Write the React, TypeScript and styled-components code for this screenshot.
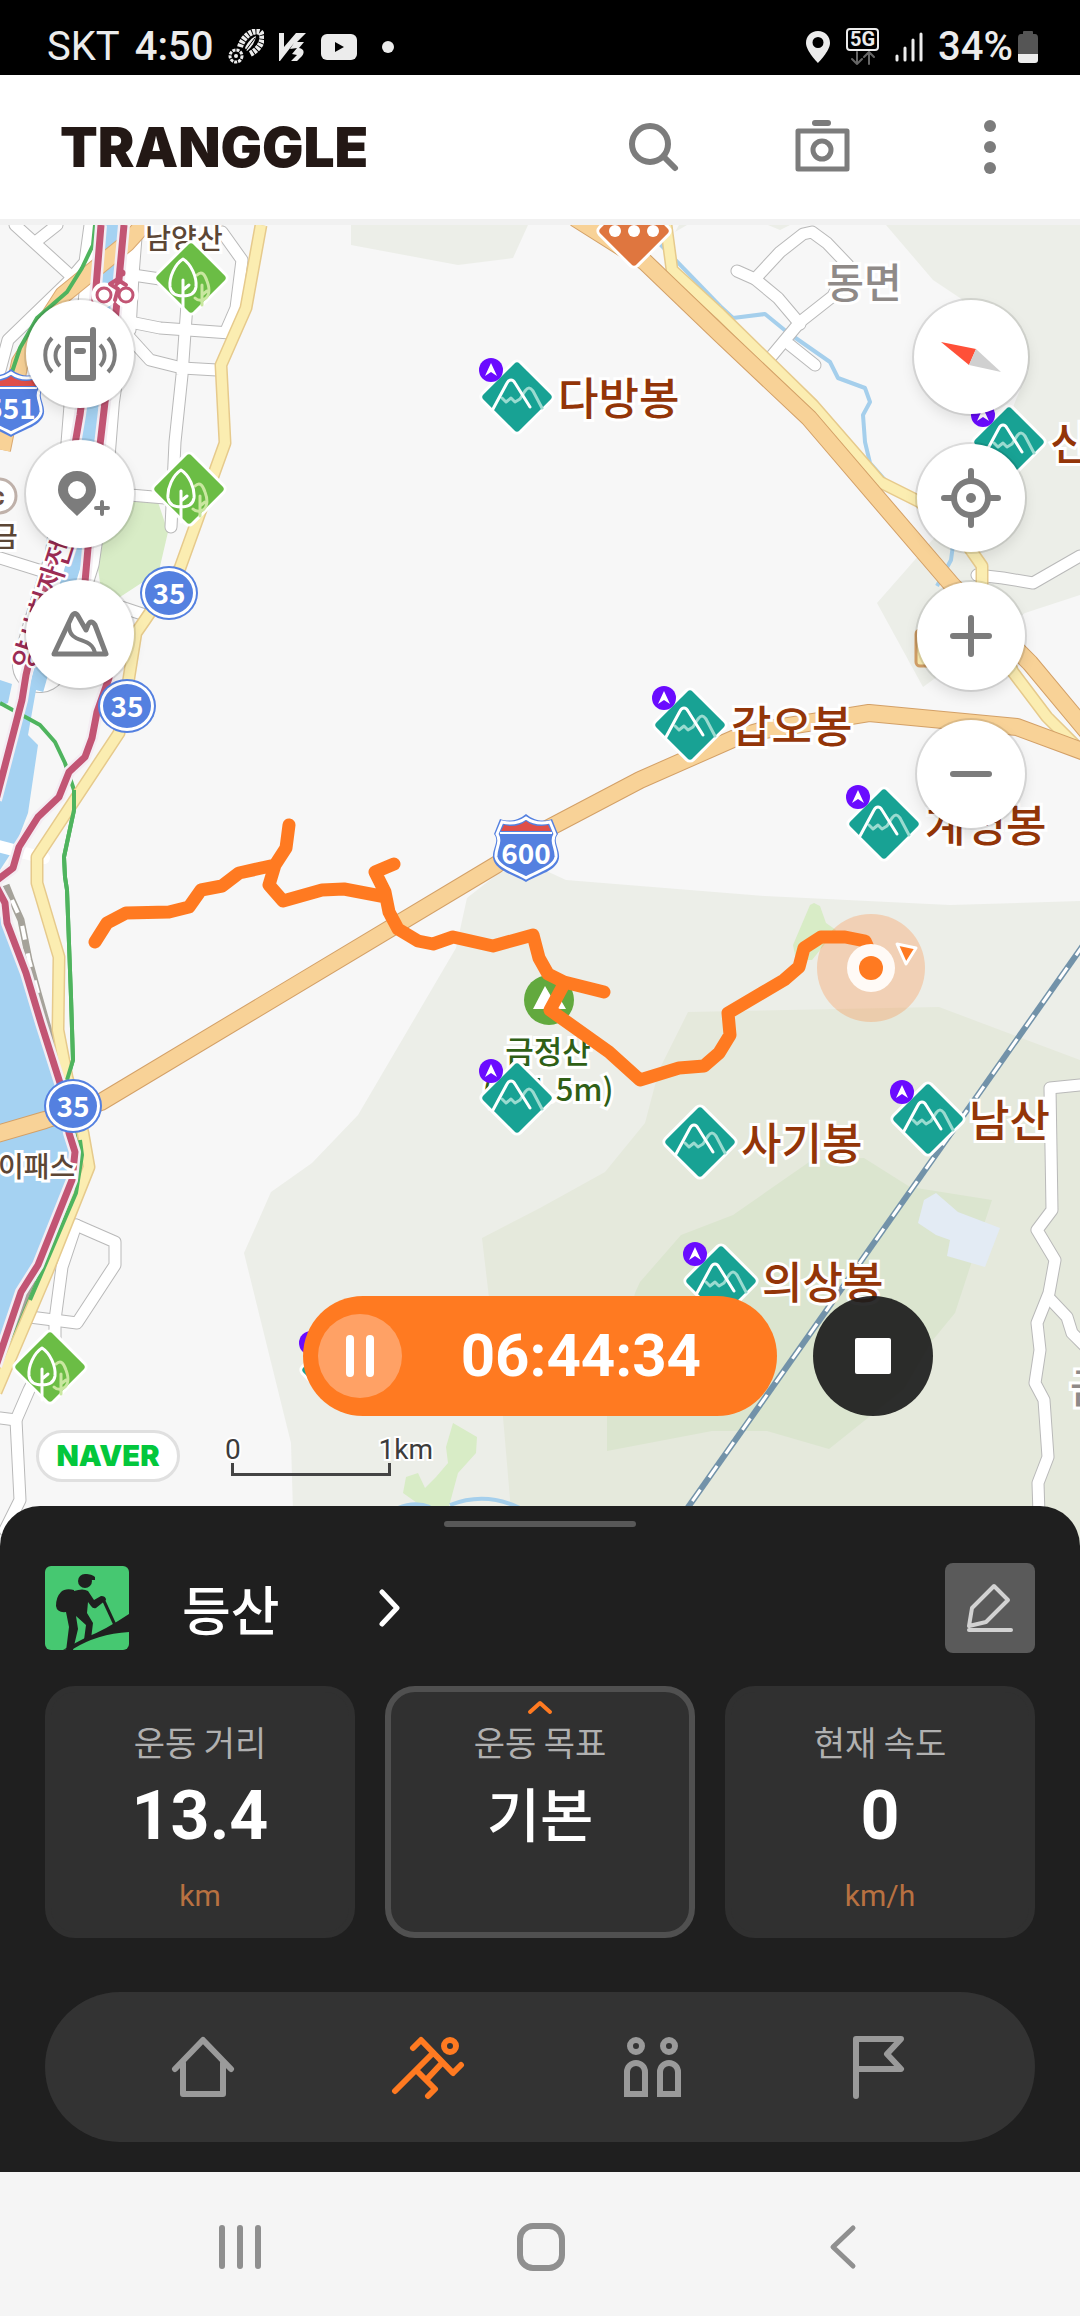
import React from "react";
import styled, { createGlobalStyle } from "styled-components";

const ORANGE = "#ff7a21";
const GREY = "#7c7c7c";
const KR = '"Noto Sans CJK KR", "Noto Sans", sans-serif';
const UI = 'Roboto, "Noto Sans CJK KR", sans-serif';

const GlobalStyle = createGlobalStyle`
  *, *::before, *::after { box-sizing: border-box; }
  body { margin: 0; background: #1f1f1f; font-family: ${UI}; }
  button { font: inherit; color: inherit; border: 0; padding: 0; background: none; cursor: pointer; }
  svg { display: block; }
`;

const Page = styled.div`
  display: flex;
  flex-direction: column;
  min-height: 100vh;
`;

/* ---------- status bar ---------- */

const StatusBar = styled.div`
  display: flex;
  justify-content: space-between;
  align-items: center;
  height: 75px;
  padding: 18px 42px 0 47px;
  background: #000;
  color: #ececec;
  font-size: 40px;
  line-height: 48px;
`;

const StatusGroup = styled.div<{ $gap: number }>`
  display: flex;
  align-items: center;
  gap: ${(p) => p.$gap}px;
`;

const Strong = styled.span`
  font-weight: 500;
`;

/* ---------- app header ---------- */

const Header = styled.header`
  display: flex;
  align-items: center;
  justify-content: space-between;
  height: 150px;
  padding: 0 54px 0 60px;
  background: #fff;
  border-bottom: 6px solid #f1f1f1;
`;

const Brand = styled.h1`
  margin: 0;
  font-family: Inter, sans-serif;
  font-weight: 900;
  font-size: 55px;
  line-height: 60px;
  color: #231815;
`;

const HeaderActions = styled.div`
  display: flex;
  gap: 96px;
`;

const IconButton = styled.button`
  display: grid;
  place-items: center;
  width: 72px;
  height: 72px;
`;

/* ---------- map ---------- */

const MapArea = styled.main`
  position: relative;
  flex: 1;
  min-height: 900px;
  overflow: hidden;
  background: #f7f7f7;
`;

const MapLayer = styled.svg`
  position: absolute;
  inset: 0;
  width: 100%;
  height: 100%;
  pointer-events: none;
`;

const MapLabel = styled.span<{ $x: number; $y: number; $size: number; $color: string; $align?: string }>`
  position: absolute;
  left: ${(p) => p.$x}px;
  top: ${(p) => p.$y}px;
  transform: translate(${(p) => (p.$align === "center" ? "-50%" : "0")}, -50%);
  font-family: ${KR};
  font-weight: 500;
  font-size: ${(p) => p.$size}px;
  line-height: 38px;
  color: ${(p) => p.$color};
  text-align: center;
  white-space: nowrap;
  -webkit-text-stroke: 6px #fff;
  paint-order: stroke fill;
`;

const Pin = styled.div<{ $x: number; $y: number }>`
  position: absolute;
  left: ${(p) => p.$x - 40}px;
  top: ${(p) => p.$y - 40}px;
  display: flex;
  align-items: center;
  gap: 1px;
`;

const PinName = styled.span`
  padding-bottom: 2px;
  font-family: ${KR};
  font-weight: 500;
  font-size: 44px;
  line-height: 48px;
  color: #933508;
  white-space: nowrap;
  -webkit-text-stroke: 6px #fff;
  paint-order: stroke fill;
`;

const CertBadge = styled.svg`
  position: absolute;
  left: 1px;
  top: 0;
`;

const RouteBadge = styled.span<{ $x: number; $y: number }>`
  position: absolute;
  left: ${(p) => p.$x}px;
  top: ${(p) => p.$y}px;
  transform: translate(-50%, -50%);
  display: grid;
  place-items: center;
  width: 54px;
  height: 50px;
  padding-bottom: 2px;
  border: 3px solid #fff;
  border-radius: 50%;
  background: #5480e0;
  box-shadow: 0 0 0 2px #5480e0;
  color: #fff;
  font-family: ${KR};
  font-weight: 700;
  font-size: 28px;
  line-height: 30px;
`;

const Shield = styled.div<{ $x: number; $y: number }>`
  position: absolute;
  left: ${(p) => p.$x}px;
  top: ${(p) => p.$y}px;
  transform: translate(-50%, -50%);
  display: grid;
  place-items: center;
  > * { grid-area: 1 / 1; }
`;

const ShieldNumber = styled.span`
  padding-top: 8px;
  color: #fff;
  font-family: ${KR};
  font-weight: 700;
  font-size: 28px;
  line-height: 30px;
`;

const FloatColumn = styled.div<{ $side: "left" | "right" }>`
  position: absolute;
  top: 75px;
  ${(p) => (p.$side === "left" ? "left: 26px;" : "right: 52px;")}
  display: flex;
  flex-direction: column;
  align-items: center;
  gap: ${(p) => (p.$side === "left" ? 32 : 30)}px;
`;

const RoundButton = styled.button<{ $size?: number }>`
  display: grid;
  place-items: center;
  width: ${(p) => p.$size ?? 108}px;
  height: ${(p) => p.$size ?? 108}px;
  border-radius: 50%;
  background: #fff;
  box-shadow: 0 0 0 2px rgba(0, 0, 0, 0.1), 0 6px 14px rgba(0, 0, 0, 0.1);
`;

const RecordControls = styled.div`
  position: absolute;
  right: 147px;
  bottom: 130px;
  display: flex;
  gap: 36px;
`;

const TimerPill = styled.div`
  display: flex;
  align-items: center;
  width: 474px;
  height: 120px;
  padding: 0 76px 0 15px;
  justify-content: space-between;
  border-radius: 60px;
  background: ${ORANGE};
  color: #fff;
`;

const PauseButton = styled.button`
  display: grid;
  place-items: center;
  width: 84px;
  height: 84px;
  border-radius: 50%;
  background: #ffa165;
`;

const Time = styled.time`
  font-weight: 700;
  font-size: 60px;
  line-height: 72px;
`;

const StopButton = styled.button`
  display: grid;
  place-items: center;
  width: 120px;
  height: 120px;
  border-radius: 50%;
  background: rgba(28, 28, 28, 0.92);
`;

const StopSquare = styled.span`
  width: 36px;
  height: 36px;
  border-radius: 2px;
  background: #fff;
`;

const MapCredits = styled.div`
  position: absolute;
  left: 36px;
  bottom: 64px;
  display: flex;
  align-items: flex-end;
  gap: 45px;
`;

const NaverLink = styled.a`
  display: grid;
  place-items: center;
  width: 144px;
  height: 52px;
  border: 3px solid #e0e0e0;
  border-radius: 26px;
  background: #fff;
  color: #03c73c;
  font-family: Inter, sans-serif;
  font-weight: 900;
  font-size: 29px;
  line-height: 32px;
  text-decoration: none;
`;

const ScaleBar = styled.div`
  padding-bottom: 6px;
  color: #3c3c3c;
  font-size: 28px;
  line-height: 26px;
`;

const ScaleNumbers = styled.div`
  display: flex;
  justify-content: space-between;
  width: 208px;
  -webkit-text-stroke: 4px #fff;
  paint-order: stroke fill;
`;

const ScaleLine = styled.div`
  width: 160px;
  height: 13px;
  margin-left: 6px;
  border: 3px solid #444;
  border-top: 0;
`;

/* ---------- bottom sheet ---------- */

const Sheet = styled.section`
  position: relative;
  margin-top: -40px;
  padding: 15px 45px 30px;
  border-radius: 40px 40px 0 0;
  background: #1f1f1f;
  color: #fff;
`;

const Handle = styled.div`
  width: 192px;
  height: 6px;
  margin: 0 auto 36px;
  border-radius: 3px;
  background: #585858;
`;

const ActivityRow = styled.div`
  display: flex;
  align-items: center;
  justify-content: space-between;
  height: 90px;
  margin-bottom: 33px;
`;

const ActivityButton = styled.button`
  display: flex;
  align-items: center;
`;

const ActivityName = styled.span`
  margin: 0 96px 0 53px;
  font-family: ${KR};
  font-weight: 500;
  font-size: 53px;
  line-height: 64px;
`;

const EditButton = styled.button`
  display: grid;
  place-items: center;
  width: 90px;
  height: 90px;
  border-radius: 8px;
  background: #5a5a5a;
`;

const Cards = styled.div`
  display: grid;
  grid-template-columns: repeat(3, 1fr);
  gap: 30px;
  margin-bottom: 54px;
`;

const Card = styled.button<{ $active?: boolean }>`
  position: relative;
  display: flex;
  flex-direction: column;
  align-items: center;
  height: 252px;
  padding-top: 28px;
  border: 6px solid ${(p) => (p.$active ? "#505050" : "#303030")};
  border-radius: 30px;
  background: #303030;
`;

const CardCaret = styled.svg`
  position: absolute;
  top: 7px;
`;

const CardLabel = styled.span`
  margin-bottom: 8px;
  color: #b0b0b0;
  font-family: ${KR};
  font-size: 34px;
  line-height: 44px;
`;

const CardValue = styled.span<{ $text?: boolean }>`
  margin-bottom: 22px;
  padding-top: ${(p) => (p.$text ? 0 : 4)}px;
  font-family: ${(p) => (p.$text ? KR : UI)};
  font-weight: ${(p) => (p.$text ? 500 : 700)};
  font-size: ${(p) => (p.$text ? 58 : 68)}px;
  line-height: 80px;
`;

const CardUnit = styled.span`
  color: #b87141;
  font-size: 30px;
  line-height: 36px;
`;

const TabBar = styled.nav`
  display: grid;
  grid-template-columns: repeat(4, 1fr);
  height: 150px;
  padding: 0 45px;
  border-radius: 75px;
  background: #333;
`;

const Tab = styled.a`
  display: grid;
  place-items: center;
`;

const SystemBar = styled.div`
  display: grid;
  grid-template-columns: repeat(3, 1fr);
  height: 144px;
  padding: 6px 87px 0 89px;
  background: #f5f5f5;
`;

const SystemKey = styled.button`
  display: grid;
  place-items: center;
`;

/* ---------- pins ---------- */

type PinKind = "mountain" | "tree" | "rest";

const pinFill: Record<PinKind, string> = { mountain: "#18a294", tree: "#6bbd45", rest: "#df763f" };

function PinIcon({ kind }: { kind: PinKind }) {
  return (
    <svg width="80" height="80" viewBox="-4 -4 80 80" fill="none" strokeLinecap="round" strokeLinejoin="round">
      <rect x="9" y="9" width="54" height="54" rx="5" transform="rotate(45 36 36)" fill={pinFill[kind]} stroke="#fff" strokeWidth="3" />
      {kind === "mountain" && (
        <>
          <path d="M21 37l4 4 5-4 4 4 5-3 5-8c3-4 5-4 8 0l9 17" stroke="#9adbd0" strokeWidth="3" />
          <path d="M12 48L26 22c2-4 6-4 8 0l15 24" stroke="#fff" strokeWidth="3" />
        </>
      )}
      {kind === "tree" && (
        <>
          <path d="M42 33c5-5 8 0 10 6 3 8 3 16-4 19-4 1-6 0-8-2M47 43v20M47 53l5-4" stroke="#c9e7a0" strokeWidth="3" />
          <path d="M28 17c8 5 14 18 13 28-1 6-6 9-13 9s-12-3-13-9c-1-10 5-23 13-28zM28 38v31M28 48l6-5" stroke="#fff" strokeWidth="3" />
        </>
      )}
      {kind === "rest" && (
        <g fill="#fff">
          <circle cx="17" cy="36" r="6" />
          <circle cx="36" cy="36" r="6" />
          <circle cx="55" cy="36" r="6" />
        </g>
      )}
    </svg>
  );
}

const pins: { x: number; y: number; kind: PinKind; name?: string; cert?: boolean }[] = [
  { x: 191, y: 53, kind: "tree" },
  { x: 189, y: 264, kind: "tree" },
  { x: 50, y: 1142, kind: "tree" },
  { x: 634, y: 6, kind: "rest" },
  { x: 517, y: 172, kind: "mountain", name: "다방봉", cert: true },
  { x: 1009, y: 217, kind: "mountain", name: "신선봉", cert: true },
  { x: 690, y: 500, kind: "mountain", name: "갑오봉", cert: true },
  { x: 884, y: 599, kind: "mountain", name: "계명봉", cert: true },
  { x: 517, y: 873, kind: "mountain", cert: true },
  { x: 700, y: 917, kind: "mountain", name: "사기봉" },
  { x: 928, y: 894, kind: "mountain", name: "남산", cert: true },
  { x: 721, y: 1056, kind: "mountain", name: "의상봉", cert: true },
  { x: 337, y: 1145, kind: "mountain", cert: true },
];

function HighwayShield({ x, y, number }: { x: number; y: number; number: string }) {
  return (
    <Shield $x={x} $y={y}>
      <svg width="68" height="70" viewBox="0 0 68 70">
        <path d="M8 6c8 3 18 2 26-5 8 7 18 8 26 5l6 15c-6 7 2 15 1 24-2 13-20 16-33 24C21 61 3 58 1 45 0 36 8 28 2 21z" fill="#5480e0" />
        <path d="M10 9c8 2 17 1 24-4 7 5 16 6 24 4l5 12c-5 8 2 15 1 23-2 10-18 14-30 21C22 58 6 54 4 44c-1-8 6-15 1-23z" fill="none" stroke="#fff" strokeWidth="3" />
        <path d="M12 12c8 2 16 1 22-4 6 5 14 6 22 4l3 6H9z" fill="#df4f49" />
        <path d="M8 20h52" stroke="#fff" strokeWidth="2" />
      </svg>
      <ShieldNumber>{number}</ShieldNumber>
    </Shield>
  );
}

/* ---------- map drawing ---------- */

const VIEW = "0 225 1080 1321";

const localRoads = [
  "15,225 70,275",
  "38,240 57,225",
  "90,225 85,262 67,283 8,340 0,370",
  "137,225 133,275 130,330",
  "133,275 160,279",
  "222,232 242,260 236,308 226,331",
  "130,322 160,328 230,333",
  "188,290 182,375 175,442 171,527",
  "130,338 150,360 182,368 217,370",
  "130,495 165,498",
  "0,558 45,572",
  "100,600 145,615",
  "76,1225 115,1242 115,1265 77,1323 30,1317",
  "76,1225 62,1267 55,1320 55,1340 29,1390 16,1420 20,1500 5,1530",
  "0,1418 16,1420",
  "737,271 755,279 778,298 800,324",
  "755,279 780,252 803,234 812,232 827,243 848,265 833,296 800,322 770,358",
  "790,345 815,365",
  "977,575 1003,578 1033,583 1080,556",
  "1080,1085 1050,1088 1052,1210 1037,1230 1055,1260 1049,1293 1037,1323 1040,1350 1035,1383 1044,1400 1048,1457 1038,1483 1040,1546",
  "1049,1298 1067,1317 1072,1333 1085,1346",
];

const yellowRoads = [
  "261,225 246,308 221,365 225,443 180,568 145,620 136,633 127,690 119,733 37,857 37,883 59,957 58,1030 67,1077 83,1133 89,1167 48,1270 -4,1392",
  "666,225 672,270 720,314 813,405 880,482 920,502 968,546 982,566 982,600 1013,672 1047,717 1090,760",
];

const expressways = [
  "146,222 127,243 63,295 20,362 2,450",
  "-10,1136 45,1120 101,1102 496,865 545,830 640,780 733,739 764,730 869,713 1017,727 1090,754",
  "575,218 645,262 720,334 809,418 952,585 1030,663 1090,735",
];

const cyclePaths = [
  "101,225 95,300 80,415 62,520 26,675 22,700 -4,800",
  "124,225 116,312 105,402 88,548 85,582 100,640 109,678 97,712 92,738 85,757 69,772 59,797 38,817 19,847 13,868 -4,881",
  "-4,886 5,903 7,923 26,973 41,1023 60,1083 69,1133 75,1152 72,1180 38,1265 21,1292 -4,1366",
];

const greenRail =
  "M95 225L93 245 82 268 67 292 37 318 20 348 10 378M0 703L40 725 55 742 65 763 74 790 74 810 64 857 65 877 67 890 71 997 73 1060 67 1080 77 1132 82 1153 76 1193 38 1280 0 1370";

function BaseMap() {
  return (
    <MapLayer viewBox={VIEW} preserveAspectRatio="xMidYMin slice" fill="none" strokeLinejoin="round" aria-hidden="true">
      <g fill="#eceee8">
        <path d="M351 225V245L458 265 513 258 528 225z" />
        <path d="M768 225l12 5 10-5zM675 232l12-7h-8z" />
        <path d="M886 225L933 280 960 298 1028 370 1015 402 985 480 877 603 923 687 1025 613 1080 595V225z" />
        <path d="M467 898L500 872 540 868 566 880 765 896 950 905 1080 901V1546H294L291 1443 244 1253 271 1192 312 1163 358 1115 456 948z" />
      </g>
      <path d="M688 1012L939 1007 1080 1060V1546H514L503 1417 482 1238 540 1208 605 1172 645 1123 659 1070z" fill="#e5e9dc" />
      <path d="M681 1235L733 1215 812 1160 864 1158 910 1187 992 1200 955 1313 932 1341 904 1389 829 1449 767 1431H712L607 1451V1413L635 1293 640 1282z" fill="#dbe5cf" />
      <path d="M918 1223L924 1200 936 1193 958 1212 1000 1228 985 1267 947 1256 950 1240 936 1235z" fill="#e3ebf4" />
      <g fill="#d8ecc6">
        <path d="M133 502H158L168 532 158 575 143 582 120 597 100 583 98 568 102 540z" />
        <path d="M810 905L814 903 820 906 826 923 836 930 812 960 796 960 793 945z" />
        <path d="M453 1423L477 1437 476 1453 458 1473 448 1510H427L403 1493 406 1477 418 1473 425 1488 436 1477 448 1463 446 1447z" />
      </g>
      <path d="M0 915L26 985 60 1090 72 1150 66 1195 36 1262 18 1292 0 1345z" fill="#a5d2f2" />
      <path d="M660 244L720 306" stroke="#a5cfec" strokeWidth="4" />
      <path d="M720 306L733 318 765 314 787 332 830 362 838 378 865 388 870 402 863 415 865 442 870 463 885 480M953 545l-2 15-14 26M398 1508c12-5 22-5 32-1M450 1505q35-14 70 3" stroke="#a5cfec" strokeWidth="4" />

      {["#b9b9b9", "#fff"].map((c, i) => (
        <g key={c} stroke={c} strokeLinecap="round">
          <polyline points="114,215 104,320 92,400 88,450 72,560 50,630 40,665" strokeWidth={i ? 54 : 56} />
          {localRoads.map((p) => (
            <polyline key={p} points={p} strokeWidth={i ? 11 : 13} />
          ))}
        </g>
      ))}
      <path d="M0 680L12 684 8 703 0 706zM22 705L40 660 36 690 28 735 38 745 28 813 15 847 0 870V785z" fill="#a5d2f2" />
      <polyline points="114,215 104,320 92,400 88,450 75,560 50,640 36,690" stroke="#a5d2f2" strokeWidth="15" />
      <polyline points="-6,845 44,858" stroke="#fff" strokeWidth="12" strokeLinecap="round" />

      <path d="M6 885L12 900 21 920 29 960 38 993 62 1077M34 1280L22 1310 5 1350" stroke="#a5a29a" strokeWidth="7" />
      <path d="M12 900L21 920 29 960 38 993" stroke="#fff" strokeWidth="4" strokeDasharray="14 14" />
      <polyline points={expressways[0]} stroke="#d9a871" strokeWidth="18" />
      <polyline points={expressways[0]} stroke="#f8d297" strokeWidth="16" />
      <path d={greenRail} stroke="#4fb45e" strokeWidth="4" />
      {yellowRoads.map((p) => (
        <g key={p}>
          <polyline points={p} stroke="#e6ca8c" strokeWidth="13" />
          <polyline points={p} stroke="#fbedb1" strokeWidth="10" />
        </g>
      ))}
      <path d="M74 790V810L64 857 65 877 67 890 71 997 73 1060 67 1080M80 1140L82 1155 76 1193 30 1300" stroke="#4fb45e" strokeWidth="4" />
      {cyclePaths.map((p) => (
        <g key={p}>
          <polyline points={p} stroke="#f4edf3" strokeWidth="12" />
          <polyline points={p} stroke="#c25574" strokeWidth="7" />
        </g>
      ))}
      {expressways.slice(1).map((p) => (
        <g key={p}>
          <polyline points={p} stroke="#d3a067" strokeWidth="18" />
          <polyline points={p} stroke="#f8d297" strokeWidth="16" />
        </g>
      ))}
      <rect x="916" y="630" width="40" height="36" rx="4" fill="#fbedb1" stroke="#d3a067" strokeWidth="3" />

      <path d="M1084 944L665 1540" stroke="#7292a9" strokeWidth="6" />
      <path d="M1084 944L665 1540" stroke="#fff" strokeWidth="3" strokeDasharray="14 15" />

      <g stroke="#fff" strokeWidth="11">
        <circle cx="104" cy="295" r="7" />
        <circle cx="126" cy="295" r="7" />
      </g>
      <g stroke="#c25574" strokeWidth="3" strokeLinecap="round">
        <circle cx="104" cy="295" r="7" fill="#fff" />
        <circle cx="126" cy="295" r="7" fill="#fff" />
        <path d="M118 279l-8 5 8 5-3 11M118 280l8 5" strokeWidth="4" />
        <circle cx="122" cy="273" r="2" fill="#c25574" />
      </g>

      <text
        transform="translate(32 671) rotate(-72)"
        fontFamily='"Noto Sans CJK KR", sans-serif'
        fontWeight="500"
        fontSize="29"
        fill="#9c2c55"
        stroke="#fff"
        strokeWidth="5"
        paintOrder="stroke"
      >
        양산천자전거길
      </text>
      <circle cx="-1" cy="496" r="17" fill="#fff" stroke="#bfb1aa" strokeWidth="3" />
      <text x="-9" y="505" fontFamily="Roboto, sans-serif" fontWeight="700" fontSize="26" fill="#6b4f44">c</text>
      <circle cx="549" cy="1000" r="25" fill="#62a93e" />
      <path d="M533 1009L545 986 552 998 556 992 566 1009z" fill="#fff" />
    </MapLayer>
  );
}

function TrackLayer() {
  return (
    <MapLayer viewBox={VIEW} preserveAspectRatio="xMidYMin slice" fill="none" strokeLinecap="round" strokeLinejoin="round" aria-hidden="true">
      <circle cx="871" cy="968" r="54" fill="#ff7a21" fillOpacity="0.26" />
      <path
        d="M95 942L107 923 126 913 169 912 189 907 201 890 222 886 239 873 275 865 286 848 289 825M275 865L269 885 283 901 322 890 344 889 386 897M394 864L375 872 385 892 389 912 398 929 418 941 433 944 453 937 493 946 533 935 539 958 548 974 564 982 604 992M564 984L550 1010 609 1052 640 1080 679 1068 704 1066 719 1053 730 1035 728 1013 784 980 799 967 804 948 821 937 845 937 865 941 869 950"
        stroke={ORANGE}
        strokeWidth="13"
      />
      <circle cx="871" cy="968" r="24" fill="#fffaf6" />
      <circle cx="871" cy="968" r="12" fill={ORANGE} />
      <path d="M897 944L916 948 906 964z" fill={ORANGE} stroke="#fff" strokeWidth="3" />
    </MapLayer>
  );
}

const stroke = { fill: "none", strokeLinecap: "round", strokeLinejoin: "round" } as const;

export default function App() {
  return (
    <Page>
      <GlobalStyle />
      <StatusBar>
        <StatusGroup $gap={15}>
          <span>SKT</span>
          <Strong>4:50</Strong>
          <svg width="36" height="36" viewBox="0 0 36 36" {...stroke} strokeLinecap="butt">
            <circle cx="8" cy="27" r="6" stroke="#ececec" strokeWidth="3" strokeDasharray="3 1" />
            <circle cx="8" cy="27" r="2" fill="#ececec" />
            <path d="M12 18C15 8 24 0 32 3c5 4 2 16-10 22" stroke="#ececec" strokeWidth="6" strokeDasharray="3 1" />
            <path d="M17 19C20 12 24 9 28 7c-1 6-4 11-9 15z" fill="#ececec" />
            <path d="M18 21l9-12" stroke="#000" strokeWidth="1" />
          </svg>
          <svg width="27" height="28" viewBox="0 0 27 28" fill="#ececec">
            <path d="M0 0H5V14L17 0H27L18 9H25L20 15C26 16 26 21 21 25L18 28H12L18 22 13 21 18 15 11 16 15 10 1 28H0z" />
          </svg>
          <svg width="36" height="26" viewBox="0 0 36 26">
            <rect width="36" height="26" rx="6" fill="#ececec" />
            <path d="M14 8l9 5-9 5z" fill="#000" />
          </svg>
          <svg width="32" height="12" viewBox="0 0 32 12">
            <circle cx="16" cy="6" r="6" fill="#ececec" />
          </svg>
        </StatusGroup>
        <StatusGroup $gap={15}>
          <svg width="26" height="32" viewBox="0 0 26 32">
            <path d="M13 0C6 0 1 5 1 12c0 8 12 20 12 20s12-12 12-20C25 5 20 0 13 0zm0 17a5 5 0 110-11 5 5 0 010 11z" fill="#ececec" fillRule="evenodd" />
          </svg>
          <svg width="34" height="38" viewBox="0 0 34 38" {...stroke}>
            <rect x="1" y="1" width="31" height="21" rx="3" stroke="#ececec" strokeWidth="2" />
            <text x="4" y="18" fontFamily="Roboto, sans-serif" fontWeight="700" fontSize="20" fill="#ececec">5G</text>
            <path d="M11 24v12M6 31l5 5 5-5M23 36V24M18 29l5-5 5 5" stroke="#666" strokeWidth="2" />
          </svg>
          <svg width="28" height="30" viewBox="0 0 28 30" {...stroke} stroke="#ececec" strokeWidth="3">
            <path d="M2 24v4M10 16v12M18 8v20M26 2v26" />
          </svg>
          <StatusGroup $gap={5}>
            <Strong>34%</Strong>
            <svg width="20" height="32" viewBox="0 0 20 32">
              <path d="M5 3V1q0-1 1-1h8q1 0 1 1v2h2q3 0 3 4v17H0V7q0-4 3-4z" fill="#555" />
              <path d="M0 23h20v6q0 3-3 3H3q-3 0-3-3z" fill="#ececec" />
            </svg>
          </StatusGroup>
        </StatusGroup>
      </StatusBar>

      <Header>
        <Brand>TRANGGLE</Brand>
        <HeaderActions>
          <IconButton aria-label="검색">
            <svg width="54" height="54" viewBox="0 0 54 54" {...stroke} stroke={GREY} strokeWidth="6">
              <circle cx="23" cy="24" r="18" />
              <path d="M37 37l11 11" />
            </svg>
          </IconButton>
          <IconButton aria-label="카메라">
            <svg width="56" height="56" viewBox="0 0 56 56" {...stroke} stroke={GREY} strokeWidth="5">
              <path d="M21 4h13" strokeWidth="6" />
              <rect x="4" y="12" width="49" height="38" />
              <circle cx="28" cy="31" r="9" />
            </svg>
          </IconButton>
          <IconButton aria-label="더보기">
            <svg width="12" height="54" viewBox="0 0 12 54" fill={GREY}>
              <circle cx="6" cy="6" r="6" />
              <circle cx="6" cy="27" r="6" />
              <circle cx="6" cy="48" r="6" />
            </svg>
          </IconButton>
        </HeaderActions>
      </Header>

      <MapArea>
        <BaseMap />
        <MapLabel $x={184} $y={12} $size={28} $color="#5c4635" $align="center">남양산</MapLabel>
        <MapLabel $x={864} $y={55} $size={41} $color="#8f8a88" $align="center">동면</MapLabel>
        <MapLabel $x={-8} $y={310} $size={28} $color="#5c4635">금</MapLabel>
        <MapLabel $x={-2} $y={940} $size={28} $color="#5c4635">이패스</MapLabel>
        <MapLabel $x={1070} $y={1160} $size={41} $color="#8f8a88">금</MapLabel>
        <MapLabel $x={548} $y={844} $size={31} $color="#2f5f16" $align="center">
          금정산<br />(801.5m)
        </MapLabel>
        <TrackLayer />
        <RouteBadge $x={169} $y={368}>35</RouteBadge>
        <RouteBadge $x={127} $y={481}>35</RouteBadge>
        <RouteBadge $x={73} $y={881}>35</RouteBadge>
        <HighwayShield x={526} y={623} number="600" />
        <HighwayShield x={11} y={178} number="551" />
        {pins.map((pin) => (
          <Pin key={`${pin.x}-${pin.y}`} $x={pin.x} $y={pin.y}>
            <PinIcon kind={pin.kind} />
            {pin.cert && (
              <CertBadge width="26" height="26" viewBox="0 0 26 26">
                <circle cx="13" cy="13" r="12" fill="#6a0bff" />
                <path d="M13 6l6 13-6-4-6 4z" fill="#fff" />
              </CertBadge>
            )}
            {pin.name && <PinName>{pin.name}</PinName>}
          </Pin>
        ))}

        <FloatColumn $side="left">
          <RoundButton aria-label="무전기">
            <svg width="80" height="56" viewBox="0 0 80 56" {...stroke} stroke={GREY} strokeWidth="6">
              <rect x="28" y="13" width="25" height="39" />
              <path d="M53 13V4M37 25h6" />
              <path d="M20 19c-6 6-6 15 0 21M12 12c-9 9-9 25 0 34M60 19c6 6 6 15 0 21M68 12c9 9 9 25 0 34" strokeWidth="4" strokeLinecap="butt" />
            </svg>
          </RoundButton>
          <RoundButton aria-label="장소 추가">
            <svg width="60" height="48" viewBox="0 0 60 48">
              <path d="M27 1C16 1 8 9 8 20c0 10 11 18 19 26 8-8 19-16 19-26C46 9 38 1 27 1zm0 28a9 9 0 110-18 9 9 0 010 18z" fill={GREY} fillRule="evenodd" />
              <path d="M46 38h12M52 32v12" stroke={GREY} strokeWidth="4" strokeLinecap="round" />
            </svg>
          </RoundButton>
          <RoundButton aria-label="산 정보">
            <svg width="60" height="48" viewBox="0 0 60 48" {...stroke} stroke={GREY} strokeWidth="5">
              <path d="M4 44L22 6q3-5 6 0l8 14 2-5q3-6 7 0L56 44z" />
              <path d="M19 14c-1 22 24 11 26 30" strokeWidth="4" />
            </svg>
          </RoundButton>
        </FloatColumn>

        <FloatColumn $side="right">
          <RoundButton $size={114} aria-label="나침반">
            <svg width="60" height="32" viewBox="0 0 60 32">
              <path d="M0 1L35 8 28 24z" fill="#ff5038" />
              <path d="M35 8L60 31 28 24z" fill="#d0d0d0" />
            </svg>
          </RoundButton>
          <RoundButton aria-label="현재 위치">
            <svg width="60" height="60" viewBox="0 0 60 60" {...stroke} stroke={GREY} strokeWidth="6">
              <circle cx="30" cy="30" r="17" />
              <path d="M30 3v9M30 48v9M3 30h9M48 30h9" />
              <circle cx="30" cy="30" r="5" fill={GREY} stroke="none" />
            </svg>
          </RoundButton>
          <RoundButton aria-label="확대">
            <svg width="42" height="42" viewBox="0 0 42 42" {...stroke} stroke={GREY} strokeWidth="6">
              <path d="M21 3v36M3 21h36" />
            </svg>
          </RoundButton>
          <RoundButton aria-label="축소">
            <svg width="42" height="42" viewBox="0 0 42 42" {...stroke} stroke={GREY} strokeWidth="6">
              <path d="M3 21h36" />
            </svg>
          </RoundButton>
        </FloatColumn>

        <RecordControls>
          <TimerPill>
            <PauseButton aria-label="일시정지">
              <svg width="28" height="42" viewBox="0 0 28 42" {...stroke} stroke="#fff" strokeWidth="8">
                <path d="M4 4v34M24 4v34" />
              </svg>
            </PauseButton>
            <Time>06:44:34</Time>
          </TimerPill>
          <StopButton aria-label="종료">
            <StopSquare />
          </StopButton>
        </RecordControls>

        <MapCredits>
          <NaverLink href="#naver">NAVER</NaverLink>
          <ScaleBar>
            <ScaleNumbers>
              <span>0</span>
              <span>1km</span>
            </ScaleNumbers>
            <ScaleLine />
          </ScaleBar>
        </MapCredits>
      </MapArea>

      <Sheet>
        <Handle />
        <ActivityRow>
          <ActivityButton>
            <svg width="84" height="84" viewBox="0 0 84 84">
              <rect width="84" height="84" rx="6" fill="#46c871" />
              <g fill="#1f1f1f">
                <circle cx="40" cy="15" r="7" />
                <path d="M40 8q7 0 10 3v3h-8z" />
                <path d="M29 25q9-3 14 0l6 9 7-4q5 0 5 4l-10 8q-3 1-5-2l-3-4-1 11 6 10-2 16-7 1 2-15-10-9 2 13-5 21-7 1 3-24-3-15q-9 1-10-6 0-9 5-14 4-4 13-2z" />
                <path d="M84 48V66Q52 68 28 83L18 84Q28 78 42 71 60 64 84 48z" />
              </g>
              <path d="M58 33l12 26" stroke="#1f1f1f" strokeWidth="3" />
            </svg>
            <ActivityName>등산</ActivityName>
            <svg width="28" height="38" viewBox="0 0 28 38" {...stroke} stroke="#fff" strokeWidth="5">
              <path d="M6 3l15 16L6 35" />
            </svg>
          </ActivityButton>
          <EditButton aria-label="편집">
            <svg width="48" height="50" viewBox="0 0 48 50" {...stroke} stroke="#d2d2d2" strokeWidth="4">
              <path d="M28 3L42 17 20 39 3 43 6 25z" />
              <path d="M3 47h42" />
            </svg>
          </EditButton>
        </ActivityRow>
        <Cards>
          <Card>
            <CardLabel>운동 거리</CardLabel>
            <CardValue>13.4</CardValue>
            <CardUnit>km</CardUnit>
          </Card>
          <Card $active>
            <CardCaret width="26" height="16" viewBox="0 0 26 16" {...stroke} stroke={ORANGE} strokeWidth="4">
              <path d="M3 13L13 4 23 13" />
            </CardCaret>
            <CardLabel>운동 목표</CardLabel>
            <CardValue $text>기본</CardValue>
          </Card>
          <Card>
            <CardLabel>현재 속도</CardLabel>
            <CardValue>0</CardValue>
            <CardUnit>km/h</CardUnit>
          </Card>
        </Cards>
        <TabBar>
          <Tab href="#home" aria-label="홈">
            <svg width="64" height="64" viewBox="0 0 64 64" {...stroke} stroke="#9a9a9a" strokeWidth="6">
              <path d="M4 34L32 5 60 34M12 28V59H52V28" />
            </svg>
          </Tab>
          <Tab href="#record" aria-label="운동">
            <svg width="74" height="66" viewBox="0 0 74 66" {...stroke} stroke={ORANGE} strokeWidth="6">
              <path d="M4 57L42 19M22 14L30 6 62 39 70 31M25 36L44 55 37 62M51 29L37 44" />
              <circle cx="59" cy="12" r="6" />
            </svg>
          </Tab>
          <Tab href="#club" aria-label="모임">
            <svg width="58" height="64" viewBox="0 0 58 64" fill="none" stroke="#9a9a9a" strokeWidth="6">
              <circle cx="12" cy="11" r="6" />
              <circle cx="45" cy="11" r="6" />
              <path d="M3 59V37a9 9 0 0118 0V59zM36 59V37a9 9 0 0118 0V59z" />
            </svg>
          </Tab>
          <Tab href="#mission" aria-label="미션">
            <svg width="54" height="66" viewBox="0 0 54 66" {...stroke} stroke="#9a9a9a" strokeWidth="6">
              <path d="M5 62V5H50L36 20 50 35H5" />
            </svg>
          </Tab>
        </TabBar>
      </Sheet>

      <SystemBar>
        <SystemKey aria-label="최근 앱">
          <svg width="44" height="46" viewBox="0 0 44 46" {...stroke} stroke="#8f8f8f" strokeWidth="6">
            <path d="M4 4v38M22 4v38M40 4v38" />
          </svg>
        </SystemKey>
        <SystemKey aria-label="홈 화면">
          <svg width="50" height="50" viewBox="0 0 50 50" {...stroke} stroke="#8f8f8f" strokeWidth="6">
            <rect x="4" y="4" width="42" height="42" rx="13" />
          </svg>
        </SystemKey>
        <SystemKey aria-label="뒤로">
          <svg width="30" height="46" viewBox="0 0 30 46" {...stroke} stroke="#8f8f8f" strokeWidth="5">
            <path d="M26 4L6 23 26 42" />
          </svg>
        </SystemKey>
      </SystemBar>
    </Page>
  );
}
